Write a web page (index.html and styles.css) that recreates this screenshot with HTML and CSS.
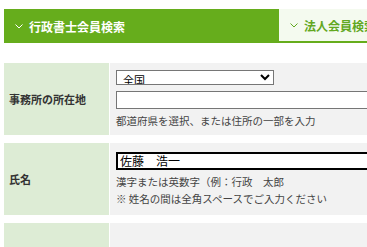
FILE: index.html
```html
<!DOCTYPE html>
<html lang="ja">
<head>
  <meta charset="UTF-8" />
  <title>会員検索</title>
  <link rel="stylesheet" href="styles.css">
</head>
<body>

<div class="page">
  <div class="tabs">
    <div class="tab tab-active">
      <svg class="chev" width="8" height="5" viewBox="0 0 8 5"><polyline points="0.5,0.5 4,4 7.5,0.5" fill="none" stroke="currentColor" stroke-width="1"/></svg>
      <span>行政書士会員検索</span>
    </div>
    <div class="tab">
      <svg class="chev" width="8" height="5" viewBox="0 0 8 5"><polyline points="0.5,0.5 4,4 7.5,0.5" fill="none" stroke="currentColor" stroke-width="1"/></svg>
      <span>法人会員検索</span>
    </div>
  </div>

  <div class="form">
    <div class="row">
      <div class="label">事務所の所在地</div>
      <div class="field">
        <select class="pref">
          <option>全国</option>
        </select>
        <input type="text" class="text" />
        <p class="help">都道府県を選択、または住所の一部を入力</p>
      </div>
    </div>

    <div class="row">
      <div class="label">氏名</div>
      <div class="field">
        <input type="text" class="text focused" value="佐藤　浩一" />
        <p class="help">漢字または英数字（例：行政　太郎<br>※ 姓名の間は全角スペースでご入力ください</p>
      </div>
    </div>

    <div class="row">
      <div class="label"></div>
      <div class="field">
        <input type="text" class="text" />
      </div>
    </div>
  </div>
</div>

</body>
</html>
```

FILE: styles.css
```css
html, body {
  overflow: hidden;
}

body {
  margin: 0;
  font-family: "Noto Sans CJK JP", "Noto Sans", sans-serif;
  color: #333;
  background-color: #fff;
}

.page {
  width: 600px;
  padding: 9px 0 0 4px;
}

.tabs {
  display: flex;
  height: 34px;
}

.tab {
  width: 275px;
  display: flex;
  align-items: center;
  gap: 6px;
  padding-left: 11px;
  box-sizing: border-box;
  background-color: #f4faef;
  color: #62a81f;
  border-bottom: 2px solid #66ad1c;
  font-size: 12px;
  font-weight: bold;
}

.tab-active {
  background-color: #66ad1c;
  color: #fff;
  border-bottom: none;
}

.chev {
  display: block;
}

.form {
  margin-top: 20px;
  display: flex;
  flex-direction: column;
  gap: 8px;
}

.row {
  display: grid;
  grid-template-columns: 105px 1fr;
  gap: 1px;
  min-height: 72px;
}

.label {
  background-color: #ddecd5;
  display: flex;
  align-items: center;
  padding-left: 5px;
  font-size: 11px;
  font-weight: bold;
  color: #333;
}

.field {
  background-color: #f2f2f2;
  padding: 6px 6px;
  display: flex;
  flex-direction: column;
  justify-content: center;
  align-items: flex-start;
}

.pref {
  width: 158px;
  height: 15px;
  font-family: inherit;
  font-size: 11px;
  padding: 0 2px;
  border: 1px solid #767676;
  border-radius: 0;
  background-color: #fff;
  color: #000;
}

.text {
  width: 300px;
  height: 18px;
  margin-top: 6px;
  box-sizing: border-box;
  border: 1px solid #767676;
  background-color: #fff;
  font-family: inherit;
  font-size: 12px;
  padding: 0 2px;
  color: #000;
}

.field > .text:first-child {
  margin-top: 0;
}

.focused {
  border: 2px solid #000;
  height: 18px;
}

.help {
  margin: 3px 0 0;
  font-size: 10.5px;
  line-height: 17px;
  color: #444;
}
```
